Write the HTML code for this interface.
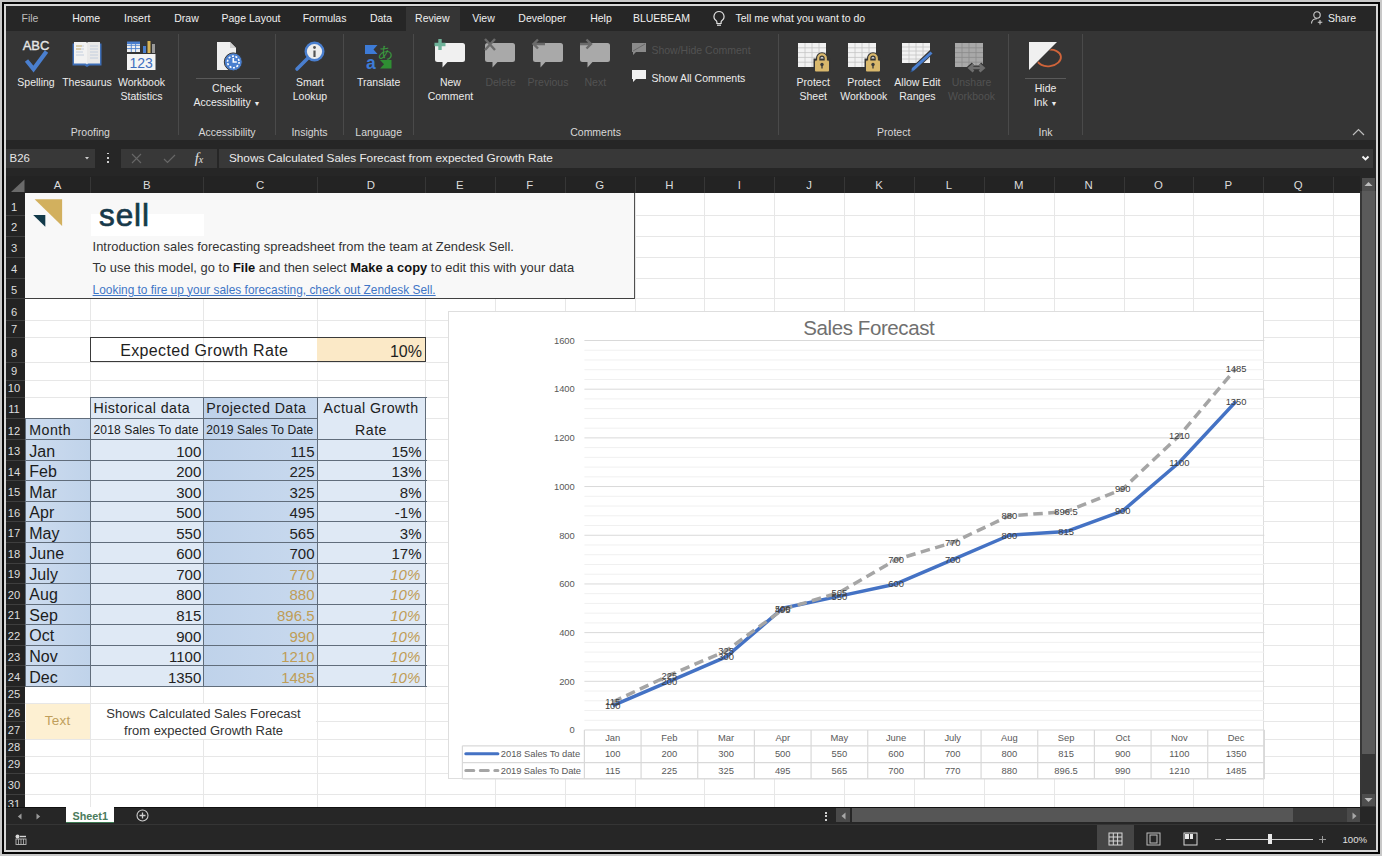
<!DOCTYPE html><html><head><meta charset="utf-8"><style>html,body{margin:0;padding:0;} body{width:1382px;height:856px;position:relative;overflow:hidden;background:#c8c8c8;font-family:"Liberation Sans", sans-serif;}div{box-sizing:border-box;}</style></head><body>
<div style="position:absolute;left:2px;top:2px;width:1378px;height:852px;background:#050505"></div>
<div style="position:absolute;left:4px;top:4px;width:1374px;height:848px;background:#d6d6d6"></div>
<div style="position:absolute;left:6px;top:6px;width:1370px;height:844px;background:#262626"></div>
<div style="position:absolute;left:6px;top:6px;width:1370px;height:24.5px;background:#262626"></div>
<div style="position:absolute;left:405.5px;top:6.5px;width:54.5px;height:24.5px;background:#353535"></div>
<div style="position:absolute;left:-270px;width:600px;text-align:center;top:12.71px;font-size:10.5px;line-height:10.5px;color:#bdbdbd;white-space:nowrap;">File</div>
<div style="position:absolute;left:-213.8px;width:600px;text-align:center;top:12.71px;font-size:10.5px;line-height:10.5px;color:#f0f0f0;white-space:nowrap;">Home</div>
<div style="position:absolute;left:-162.8px;width:600px;text-align:center;top:12.71px;font-size:10.5px;line-height:10.5px;color:#f0f0f0;white-space:nowrap;">Insert</div>
<div style="position:absolute;left:-113.5px;width:600px;text-align:center;top:12.71px;font-size:10.5px;line-height:10.5px;color:#f0f0f0;white-space:nowrap;">Draw</div>
<div style="position:absolute;left:-49px;width:600px;text-align:center;top:12.71px;font-size:10.5px;line-height:10.5px;color:#f0f0f0;white-space:nowrap;">Page Layout</div>
<div style="position:absolute;left:24.600000000000023px;width:600px;text-align:center;top:12.71px;font-size:10.5px;line-height:10.5px;color:#f0f0f0;white-space:nowrap;">Formulas</div>
<div style="position:absolute;left:81px;width:600px;text-align:center;top:12.71px;font-size:10.5px;line-height:10.5px;color:#f0f0f0;white-space:nowrap;">Data</div>
<div style="position:absolute;left:132.3px;width:600px;text-align:center;top:12.71px;font-size:10.5px;line-height:10.5px;color:#f0f0f0;white-space:nowrap;">Review</div>
<div style="position:absolute;left:183.5px;width:600px;text-align:center;top:12.71px;font-size:10.5px;line-height:10.5px;color:#f0f0f0;white-space:nowrap;">View</div>
<div style="position:absolute;left:242.29999999999995px;width:600px;text-align:center;top:12.71px;font-size:10.5px;line-height:10.5px;color:#f0f0f0;white-space:nowrap;">Developer</div>
<div style="position:absolute;left:301px;width:600px;text-align:center;top:12.71px;font-size:10.5px;line-height:10.5px;color:#f0f0f0;white-space:nowrap;">Help</div>
<div style="position:absolute;left:361.5px;width:600px;text-align:center;top:12.71px;font-size:10.5px;line-height:10.5px;color:#f0f0f0;white-space:nowrap;">BLUEBEAM</div>
<svg style="position:absolute;left:711px;top:10px;" width="16" height="17" viewBox="0 0 16 17"><path d="M8 1.5a5 5 0 0 0-3 9c.6.5.9 1.1.9 1.8v1.2h4.2v-1.2c0-.7.3-1.3.9-1.8a5 5 0 0 0-3-9z" fill="none" stroke="#e0e0e0" stroke-width="1.2"/><path d="M6 15.2h4" stroke="#e0e0e0" stroke-width="1.2"/></svg>
<div style="position:absolute;left:735.5px;top:12.71px;font-size:10.5px;line-height:10.5px;color:#f0f0f0;white-space:nowrap;">Tell me what you want to do</div>
<svg style="position:absolute;left:1310px;top:10px;" width="15" height="15" viewBox="0 0 15 15"><circle cx="7" cy="5" r="3.2" fill="none" stroke="#d0d0d0" stroke-width="1.1"/><path d="M1.5 13.5c0-3 2.5-4.8 5.5-4.8" fill="none" stroke="#d0d0d0" stroke-width="1.1"/><path d="M10 10v4.5M7.8 12.2h4.5" stroke="#d0d0d0" stroke-width="1.1"/></svg>
<div style="position:absolute;left:1328px;top:12.71px;font-size:10.5px;line-height:10.5px;color:#f0f0f0;white-space:nowrap;">Share</div>
<div style="position:absolute;left:6px;top:30.5px;width:1370px;height:109px;background:#353535"></div>
<div style="position:absolute;left:178px;top:34px;width:1px;height:101px;background:#4a4a4a"></div>
<div style="position:absolute;left:275px;top:34px;width:1px;height:101px;background:#4a4a4a"></div>
<div style="position:absolute;left:343px;top:34px;width:1px;height:101px;background:#4a4a4a"></div>
<div style="position:absolute;left:413px;top:34px;width:1px;height:101px;background:#4a4a4a"></div>
<div style="position:absolute;left:778px;top:34px;width:1px;height:101px;background:#4a4a4a"></div>
<div style="position:absolute;left:1008px;top:34px;width:1px;height:101px;background:#4a4a4a"></div>
<div style="position:absolute;left:1082px;top:34px;width:1px;height:101px;background:#4a4a4a"></div>
<div style="position:absolute;left:-264px;width:600px;text-align:center;top:77.11px;font-size:10.5px;line-height:10.5px;color:#ececec;white-space:nowrap;">Spelling</div>
<div style="position:absolute;left:-213px;width:600px;text-align:center;top:77.11px;font-size:10.5px;line-height:10.5px;color:#ececec;white-space:nowrap;">Thesaurus</div>
<div style="position:absolute;left:-158.5px;width:600px;text-align:center;top:77.11px;font-size:10.5px;line-height:10.5px;color:#ececec;white-space:nowrap;">Workbook</div>
<div style="position:absolute;left:-158.5px;width:600px;text-align:center;top:91.11px;font-size:10.5px;line-height:10.5px;color:#ececec;white-space:nowrap;">Statistics</div>
<div style="position:absolute;left:-73px;width:600px;text-align:center;top:83.11px;font-size:10.5px;line-height:10.5px;color:#ececec;white-space:nowrap;">Check</div>
<div style="position:absolute;left:-73px;width:600px;text-align:center;top:96.61px;font-size:10.5px;line-height:10.5px;color:#ececec;white-space:nowrap;">Accessibility <span style="font-size:7px">&#9660;</span></div>
<div style="position:absolute;left:10px;width:600px;text-align:center;top:77.11px;font-size:10.5px;line-height:10.5px;color:#ececec;white-space:nowrap;">Smart</div>
<div style="position:absolute;left:10px;width:600px;text-align:center;top:91.11px;font-size:10.5px;line-height:10.5px;color:#ececec;white-space:nowrap;">Lookup</div>
<div style="position:absolute;left:78.69999999999999px;width:600px;text-align:center;top:77.11px;font-size:10.5px;line-height:10.5px;color:#ececec;white-space:nowrap;">Translate</div>
<div style="position:absolute;left:150.39999999999998px;width:600px;text-align:center;top:77.11px;font-size:10.5px;line-height:10.5px;color:#ececec;white-space:nowrap;">New</div>
<div style="position:absolute;left:150.39999999999998px;width:600px;text-align:center;top:91.11px;font-size:10.5px;line-height:10.5px;color:#ececec;white-space:nowrap;">Comment</div>
<div style="position:absolute;left:200.60000000000002px;width:600px;text-align:center;top:77.11px;font-size:10.5px;line-height:10.5px;color:#525252;white-space:nowrap;">Delete</div>
<div style="position:absolute;left:248px;width:600px;text-align:center;top:77.11px;font-size:10.5px;line-height:10.5px;color:#525252;white-space:nowrap;">Previous</div>
<div style="position:absolute;left:295.29999999999995px;width:600px;text-align:center;top:77.11px;font-size:10.5px;line-height:10.5px;color:#525252;white-space:nowrap;">Next</div>
<div style="position:absolute;left:651.4px;top:45.11px;font-size:10.5px;line-height:10.5px;color:#525252;white-space:nowrap;">Show/Hide Comment</div>
<div style="position:absolute;left:651.4px;top:72.61px;font-size:10.5px;line-height:10.5px;color:#ececec;white-space:nowrap;">Show All Comments</div>
<div style="position:absolute;left:513.2px;width:600px;text-align:center;top:77.11px;font-size:10.5px;line-height:10.5px;color:#ececec;white-space:nowrap;">Protect</div>
<div style="position:absolute;left:513.2px;width:600px;text-align:center;top:91.11px;font-size:10.5px;line-height:10.5px;color:#ececec;white-space:nowrap;">Sheet</div>
<div style="position:absolute;left:563.8px;width:600px;text-align:center;top:77.11px;font-size:10.5px;line-height:10.5px;color:#ececec;white-space:nowrap;">Protect</div>
<div style="position:absolute;left:563.8px;width:600px;text-align:center;top:91.11px;font-size:10.5px;line-height:10.5px;color:#ececec;white-space:nowrap;">Workbook</div>
<div style="position:absolute;left:617.4px;width:600px;text-align:center;top:77.11px;font-size:10.5px;line-height:10.5px;color:#ececec;white-space:nowrap;">Allow Edit</div>
<div style="position:absolute;left:617.4px;width:600px;text-align:center;top:91.11px;font-size:10.5px;line-height:10.5px;color:#ececec;white-space:nowrap;">Ranges</div>
<div style="position:absolute;left:671.5px;width:600px;text-align:center;top:77.11px;font-size:10.5px;line-height:10.5px;color:#525252;white-space:nowrap;">Unshare</div>
<div style="position:absolute;left:671.5px;width:600px;text-align:center;top:91.11px;font-size:10.5px;line-height:10.5px;color:#525252;white-space:nowrap;">Workbook</div>
<div style="position:absolute;left:745.5999999999999px;width:600px;text-align:center;top:83.11px;font-size:10.5px;line-height:10.5px;color:#ececec;white-space:nowrap;">Hide</div>
<div style="position:absolute;left:745.5999999999999px;width:600px;text-align:center;top:96.61px;font-size:10.5px;line-height:10.5px;color:#ececec;white-space:nowrap;">Ink <span style="font-size:7px">&#9660;</span></div>
<div style="position:absolute;left:-209.6px;width:600px;text-align:center;top:127.11px;font-size:10.5px;line-height:10.5px;color:#d8d8d8;white-space:nowrap;">Proofing</div>
<div style="position:absolute;left:-73px;width:600px;text-align:center;top:127.11px;font-size:10.5px;line-height:10.5px;color:#d8d8d8;white-space:nowrap;">Accessibility</div>
<div style="position:absolute;left:9.5px;width:600px;text-align:center;top:127.11px;font-size:10.5px;line-height:10.5px;color:#d8d8d8;white-space:nowrap;">Insights</div>
<div style="position:absolute;left:78.69999999999999px;width:600px;text-align:center;top:127.11px;font-size:10.5px;line-height:10.5px;color:#d8d8d8;white-space:nowrap;">Language</div>
<div style="position:absolute;left:295.6px;width:600px;text-align:center;top:127.11px;font-size:10.5px;line-height:10.5px;color:#d8d8d8;white-space:nowrap;">Comments</div>
<div style="position:absolute;left:593.7px;width:600px;text-align:center;top:127.11px;font-size:10.5px;line-height:10.5px;color:#d8d8d8;white-space:nowrap;">Protect</div>
<div style="position:absolute;left:745.5999999999999px;width:600px;text-align:center;top:127.11px;font-size:10.5px;line-height:10.5px;color:#d8d8d8;white-space:nowrap;">Ink</div>
<div style="position:absolute;left:196px;top:78px;width:63.5px;height:1px;background:#5a5a5a"></div>
<div style="position:absolute;left:1025.3px;top:78px;width:40.6px;height:1px;background:#5a5a5a"></div>
<svg style="position:absolute;left:1352px;top:128px;" width="13" height="8" viewBox="0 0 13 8"><path d="M1 7l5.5-5.5L12 7" fill="none" stroke="#bdbdbd" stroke-width="1.2"/></svg>
<svg style="position:absolute;left:18px;top:38px;" width="36" height="36" viewBox="0 0 36 36"><text x="18" y="12.3" text-anchor="middle" font-family="Liberation Sans" font-size="13" fill="#e6e6e6" stroke="#e6e6e6" stroke-width="0.35">ABC</text><path d="M8.5 22.5l7 8.5 13-17.5" fill="none" stroke="#4a7fcf" stroke-width="4.2"/></svg>
<svg style="position:absolute;left:71px;top:41px;" width="32" height="28" viewBox="0 0 32 28"><path d="M1.5 2.5h13c.6 0 1 .4 1.5 1 .5-.6.9-1 1.5-1h13v22h-12l-2.5 1.5-2.5-1.5h-12z" fill="#3e6fb8"/><path d="M3 1h11.5c.8 0 1.5.6 1.5 1.2V23.5c-.3-.6-.9-1-1.5-1H3z" fill="#f2f2f2"/><path d="M29 1H17.5c-.8 0-1.5.6-1.5 1.2V23.5c.3-.6.9-1 1.5-1H29z" fill="#e9e9e9"/><path d="M5 5h8M5 8h8M5 11h7M5 14h8M19 5h8M19 8h8M19 11h8M19 14h8M19 17h8" stroke="#b9c7da" stroke-width="0.8"/><path d="M5 5h6M5 8h5" stroke="#d6b356" stroke-width="0.8"/></svg>
<svg style="position:absolute;left:126px;top:40px;" width="31" height="31" viewBox="0 0 31 31"><rect x="1" y="2" width="13" height="10" fill="#f0f0f0"/><path d="M1 5.3h13M1 8.6h13M5.3 2v10M9.6 2v10" stroke="#4a7fcf" stroke-width="0.9"/><rect x="1" y="1.5" width="13" height="2.5" fill="#4a7fcf"/><rect x="17" y="6" width="3" height="7" fill="#4a7fcf"/><rect x="21.5" y="1" width="3" height="12" fill="#d6b356"/><rect x="26" y="4" width="3" height="9" fill="#9a9a9a"/><rect x="1" y="14" width="28.5" height="16" fill="#f4f4f4"/><text x="15.2" y="27.5" text-anchor="middle" font-family="Liberation Sans" font-size="14" fill="#3f6fc0">123</text></svg>
<svg style="position:absolute;left:214px;top:40px;" width="30" height="32" viewBox="0 0 30 32"><path d="M3 2h13l6 6v22H3z" fill="#efefef"/><path d="M16 2v6h6" fill="#cfcfcf"/><circle cx="19.3" cy="21.9" r="9" fill="#4a7fcf" stroke="#353535" stroke-width="1"/><circle cx="19.3" cy="21.9" r="5.8" fill="none" stroke="#fff" stroke-width="1.6" stroke-dasharray="2 1.6"/><path d="M19.3 18v4h3.5" fill="none" stroke="#fff" stroke-width="1.6"/></svg>
<svg style="position:absolute;left:293px;top:40.5px;" width="33" height="32" viewBox="0 0 33 32"><path d="M4 28l11-11" stroke="#4a7fcf" stroke-width="3.6" stroke-linecap="round"/><circle cx="21.5" cy="10.5" r="8.8" fill="#ededed" stroke="#4a7fcf" stroke-width="2.4"/><circle cx="21.5" cy="6.5" r="1.4" fill="#555"/><path d="M21.5 9.5v6.5" stroke="#555" stroke-width="2.2"/></svg>
<svg style="position:absolute;left:362px;top:39px;" width="33" height="33" viewBox="0 0 33 33"><path d="M3 6H15.5L11.5 10.5L15.5 15H3Z" fill="#3d7bd6"/><text x="8.8" y="30.3" text-anchor="middle" font-family="Liberation Sans" font-size="17.5" font-weight="bold" fill="#3d7bd6">a</text><text x="23.3" y="17.5" text-anchor="middle" font-family="Liberation Sans" font-size="15" fill="#3a9a3f">&#12354;</text><path d="M29.5 21V29.5H18L22 25.2L18 21Z" fill="#2f8f33"/></svg>
<svg style="position:absolute;left:433px;top:38px;" width="34" height="31" viewBox="0 0 34 31"><path d="M4.5 5h25a2.5 2.5 0 0 1 2.5 2.5v14a2.5 2.5 0 0 1-2.5 2.5H14.5l-5 5.5v-5.5H4.5a2.5 2.5 0 0 1-2.5-2.5v-14a2.5 2.5 0 0 1 2.5-2.5z" fill="#f0f0f0"/><path d="M7 1v11M1.5 6.5h11" stroke="#6fb39a" stroke-width="3.4"/></svg>
<svg style="position:absolute;left:483px;top:38px;" width="34" height="31" viewBox="0 0 34 31"><path d="M4.5 5h25a2.5 2.5 0 0 1 2.5 2.5v14a2.5 2.5 0 0 1-2.5 2.5H14.5l-5 5.5v-5.5H4.5a2.5 2.5 0 0 1-2.5-2.5v-14a2.5 2.5 0 0 1 2.5-2.5z" fill="#a9a9a9"/><path d="M2 1l10 11M12 1L2 12" stroke="#6a6a6a" stroke-width="2.4"/></svg>
<svg style="position:absolute;left:531px;top:38px;" width="34" height="31" viewBox="0 0 34 31"><path d="M4.5 5h25a2.5 2.5 0 0 1 2.5 2.5v14a2.5 2.5 0 0 1-2.5 2.5H14.5l-5 5.5v-5.5H4.5a2.5 2.5 0 0 1-2.5-2.5v-14a2.5 2.5 0 0 1 2.5-2.5z" fill="#a9a9a9"/><path d="M14 6H3M7 1.5L2.5 6 7 10.5" fill="none" stroke="#6a6a6a" stroke-width="2.4"/></svg>
<svg style="position:absolute;left:578px;top:38px;" width="34" height="31" viewBox="0 0 34 31"><path d="M4.5 5h25a2.5 2.5 0 0 1 2.5 2.5v14a2.5 2.5 0 0 1-2.5 2.5H14.5l-5 5.5v-5.5H4.5a2.5 2.5 0 0 1-2.5-2.5v-14a2.5 2.5 0 0 1 2.5-2.5z" fill="#a9a9a9"/><path d="M2 6h11M8.5 1.5L13 6 8.5 10.5" fill="none" stroke="#6a6a6a" stroke-width="2.4"/></svg>
<svg style="position:absolute;left:631px;top:42px;" width="16" height="14" viewBox="0 0 16 14"><path d="M1 1h14v9H5l-3 3v-3H1z" fill="#8a8a8a"/><path d="M2 9L14 2" stroke="#6a6a6a" stroke-width="1"/></svg>
<svg style="position:absolute;left:631px;top:69px;" width="16" height="14" viewBox="0 0 16 14"><path d="M1 1h14v9H5l-3 3v-3H1z" fill="#f0f0f0"/></svg>
<svg style="position:absolute;left:797px;top:42px;" width="34" height="32" viewBox="0 0 34 32"><path d="M1 1h28v24H1z" fill="#f2f2f2"/><path d="M1 5.8h28" stroke="#c4c4c4" stroke-width="0.8"/><path d="M1 10.6h28" stroke="#c4c4c4" stroke-width="0.8"/><path d="M1 15.4h28" stroke="#c4c4c4" stroke-width="0.8"/><path d="M1 20.2h28" stroke="#c4c4c4" stroke-width="0.8"/><path d="M8 1v24" stroke="#c4c4c4" stroke-width="0.8"/><path d="M15 1v24" stroke="#c4c4c4" stroke-width="0.8"/><path d="M22 1v24" stroke="#c4c4c4" stroke-width="0.8"/><path d="M16.5 16.5h17v14h-17z" fill="#353535"/><path d="M21.2 19v-2.8a3.8 3.8 0 0 1 7.6 0v2.8" fill="none" stroke="#353535" stroke-width="4.5"/><path d="M21.2 19v-2.8a3.8 3.8 0 0 1 7.6 0v2.8" fill="none" stroke="#d9b86c" stroke-width="2.2"/><rect x="18" y="18.5" width="14" height="11" rx="1" fill="#d9b86c"/><circle cx="25" cy="22.5" r="1.7" fill="#3a3a3a"/><path d="M25 22.5v4" stroke="#3a3a3a" stroke-width="1.3"/></svg>
<svg style="position:absolute;left:847px;top:42px;" width="34" height="32" viewBox="0 0 34 32"><path d="M1 1h28v24H1z" fill="#f2f2f2"/><path d="M1 5.8h28" stroke="#c4c4c4" stroke-width="0.8"/><path d="M1 10.6h28" stroke="#c4c4c4" stroke-width="0.8"/><path d="M1 15.4h28" stroke="#c4c4c4" stroke-width="0.8"/><path d="M1 20.2h28" stroke="#c4c4c4" stroke-width="0.8"/><path d="M8 1v24" stroke="#c4c4c4" stroke-width="0.8"/><path d="M15 1v24" stroke="#c4c4c4" stroke-width="0.8"/><path d="M22 1v24" stroke="#c4c4c4" stroke-width="0.8"/><path d="M17.5 16.5h17v14h-17z" fill="#353535"/><path d="M22.2 19v-2.8a3.8 3.8 0 0 1 7.6 0v2.8" fill="none" stroke="#353535" stroke-width="4.5"/><path d="M22.2 19v-2.8a3.8 3.8 0 0 1 7.6 0v2.8" fill="none" stroke="#d9b86c" stroke-width="2.2"/><rect x="19" y="18.5" width="14" height="11" rx="1" fill="#d9b86c"/><circle cx="26" cy="22.5" r="1.7" fill="#3a3a3a"/><path d="M26 22.5v4" stroke="#3a3a3a" stroke-width="1.3"/></svg>
<svg style="position:absolute;left:901px;top:42px;" width="36" height="32" viewBox="0 0 36 32"><path d="M1 1h28v20H1z" fill="#f2f2f2"/><path d="M1 5.0h28" stroke="#c4c4c4" stroke-width="0.8"/><path d="M1 9.0h28" stroke="#c4c4c4" stroke-width="0.8"/><path d="M1 13.0h28" stroke="#c4c4c4" stroke-width="0.8"/><path d="M1 17.0h28" stroke="#c4c4c4" stroke-width="0.8"/><path d="M8 1v20" stroke="#c4c4c4" stroke-width="0.8"/><path d="M15 1v20" stroke="#c4c4c4" stroke-width="0.8"/><path d="M22 1v20" stroke="#c4c4c4" stroke-width="0.8"/><path d="M8.5 30.5l1.5-4.5L29 8l3.5 3.5L14 29z" fill="#353535"/><path d="M10 29.5l1-3.5L29.5 9.5 31.5 11.5 13 28.5z" fill="#4a7fcf"/><path d="M9.2 30.6l1.2-3 2 2z" fill="#2c4f80"/></svg>
<svg style="position:absolute;left:954px;top:42px;" width="34" height="32" viewBox="0 0 34 32"><path d="M1 1h28v24H1z" fill="#a8a8a8"/><path d="M1 5.8h28" stroke="#8a8a8a" stroke-width="0.8"/><path d="M1 10.6h28" stroke="#8a8a8a" stroke-width="0.8"/><path d="M1 15.4h28" stroke="#8a8a8a" stroke-width="0.8"/><path d="M1 20.2h28" stroke="#8a8a8a" stroke-width="0.8"/><path d="M8 1v24" stroke="#8a8a8a" stroke-width="0.8"/><path d="M15 1v24" stroke="#8a8a8a" stroke-width="0.8"/><path d="M22 1v24" stroke="#8a8a8a" stroke-width="0.8"/><path d="M16 26h13M19.5 22.5l-4 3.5 4 3.5M25.5 22.5l4 3.5-4 3.5" fill="none" stroke="#353535" stroke-width="5"/><path d="M16 26h13M19.5 22.5l-4 3.5 4 3.5M25.5 22.5l4 3.5-4 3.5" fill="none" stroke="#6e6e6e" stroke-width="2.6"/></svg>
<svg style="position:absolute;left:1027px;top:40px;" width="36" height="32" viewBox="0 0 36 32"><path d="M2 2h28L2 30z" fill="#f0f0f0"/><ellipse cx="22" cy="18" rx="12" ry="8.2" fill="none" stroke="#d0643a" stroke-width="1.8" transform="rotate(-8 22 18)"/><path d="M30 2L2 30" stroke="#353535" stroke-width="1.5"/><path d="M2 2h28L2 30z" fill="#f0f0f0" clip-path="none"/></svg>
<div style="position:absolute;left:6px;top:139.5px;width:1370px;height:36px;background:#262626"></div>
<div style="position:absolute;left:6px;top:148.5px;width:89px;height:19.5px;background:#383838"></div>
<div style="position:absolute;left:9.6px;top:153.15px;font-size:11.4px;line-height:11.4px;color:#e6e6e6;white-space:nowrap;">B26</div>
<svg style="position:absolute;left:85px;top:157px;" width="4" height="3" viewBox="0 0 4 3"><path d="M0 0h4L2 2.5z" fill="#cfcfcf"/></svg>
<div style="position:absolute;left:107px;top:152.6px;width:1.7px;height:1.7px;background:#cfcfcf"></div>
<div style="position:absolute;left:107px;top:157px;width:1.7px;height:1.7px;background:#cfcfcf"></div>
<div style="position:absolute;left:107px;top:161.4px;width:1.7px;height:1.7px;background:#cfcfcf"></div>
<div style="position:absolute;left:121px;top:148.5px;width:96px;height:19.5px;background:#383838"></div>
<svg style="position:absolute;left:131px;top:153px;" width="11" height="11" viewBox="0 0 11 11"><path d="M1 1l9 9M10 1L1 10" stroke="#676767" stroke-width="1.1"/></svg>
<svg style="position:absolute;left:163px;top:153px;" width="13" height="11" viewBox="0 0 13 11"><path d="M1 6l3.5 3.5L12 2" fill="none" stroke="#676767" stroke-width="1.2"/></svg>
<div style="position:absolute;left:194.8px;top:150.73px;font-size:14.5px;line-height:14.5px;color:#e0e0e0;white-space:nowrap;font-family:'Liberation Serif',serif;"><i>f</i><span style="font-size:10px"><i>x</i></span></div>
<div style="position:absolute;left:219px;top:148.5px;width:1154px;height:19.5px;background:#383838"></div>
<div style="position:absolute;left:228.9px;top:152.81px;font-size:11.8px;line-height:11.8px;color:#ececec;white-space:nowrap;">Shows Calculated Sales Forecast from expected Growth Rate</div>
<svg style="position:absolute;left:1361px;top:155px;" width="9" height="7" viewBox="0 0 9 7"><path d="M1.5 1.5l3 3 3-3" fill="none" stroke="#f4f4f4" stroke-width="1.9"/></svg>
<div style="position:absolute;left:6px;top:175.5px;width:1354px;height:17.5px;background:#232323"></div>
<svg style="position:absolute;left:10px;top:178px;" width="16" height="15" viewBox="0 0 16 15"><path d="M14.5 1.5V14H1z" fill="#6a6a6a"/></svg>
<div style="position:absolute;left:-242.35px;width:600px;text-align:center;top:180.15px;font-size:11.4px;line-height:11.4px;color:#dcdcdc;white-space:nowrap;">A</div>
<div style="position:absolute;left:90px;top:177px;width:1px;height:16px;background:#363636"></div>
<div style="position:absolute;left:-153.2px;width:600px;text-align:center;top:180.15px;font-size:11.4px;line-height:11.4px;color:#dcdcdc;white-space:nowrap;">B</div>
<div style="position:absolute;left:203px;top:177px;width:1px;height:16px;background:#363636"></div>
<div style="position:absolute;left:-39.94999999999999px;width:600px;text-align:center;top:180.15px;font-size:11.4px;line-height:11.4px;color:#dcdcdc;white-space:nowrap;">C</div>
<div style="position:absolute;left:317px;top:177px;width:1px;height:16px;background:#363636"></div>
<div style="position:absolute;left:70.89999999999998px;width:600px;text-align:center;top:180.15px;font-size:11.4px;line-height:11.4px;color:#dcdcdc;white-space:nowrap;">D</div>
<div style="position:absolute;left:425px;top:177px;width:1px;height:16px;background:#363636"></div>
<div style="position:absolute;left:159.925px;width:600px;text-align:center;top:180.15px;font-size:11.4px;line-height:11.4px;color:#dcdcdc;white-space:nowrap;">E</div>
<div style="position:absolute;left:495px;top:177px;width:1px;height:16px;background:#363636"></div>
<div style="position:absolute;left:229.7750000000001px;width:600px;text-align:center;top:180.15px;font-size:11.4px;line-height:11.4px;color:#dcdcdc;white-space:nowrap;">F</div>
<div style="position:absolute;left:565px;top:177px;width:1px;height:16px;background:#363636"></div>
<div style="position:absolute;left:299.625px;width:600px;text-align:center;top:180.15px;font-size:11.4px;line-height:11.4px;color:#dcdcdc;white-space:nowrap;">G</div>
<div style="position:absolute;left:635px;top:177px;width:1px;height:16px;background:#363636"></div>
<div style="position:absolute;left:369.4749999999999px;width:600px;text-align:center;top:180.15px;font-size:11.4px;line-height:11.4px;color:#dcdcdc;white-space:nowrap;">H</div>
<div style="position:absolute;left:704px;top:177px;width:1px;height:16px;background:#363636"></div>
<div style="position:absolute;left:439.32500000000005px;width:600px;text-align:center;top:180.15px;font-size:11.4px;line-height:11.4px;color:#dcdcdc;white-space:nowrap;">I</div>
<div style="position:absolute;left:774px;top:177px;width:1px;height:16px;background:#363636"></div>
<div style="position:absolute;left:509.17499999999995px;width:600px;text-align:center;top:180.15px;font-size:11.4px;line-height:11.4px;color:#dcdcdc;white-space:nowrap;">J</div>
<div style="position:absolute;left:844px;top:177px;width:1px;height:16px;background:#363636"></div>
<div style="position:absolute;left:579.0249999999999px;width:600px;text-align:center;top:180.15px;font-size:11.4px;line-height:11.4px;color:#dcdcdc;white-space:nowrap;">K</div>
<div style="position:absolute;left:914px;top:177px;width:1px;height:16px;background:#363636"></div>
<div style="position:absolute;left:648.875px;width:600px;text-align:center;top:180.15px;font-size:11.4px;line-height:11.4px;color:#dcdcdc;white-space:nowrap;">L</div>
<div style="position:absolute;left:984px;top:177px;width:1px;height:16px;background:#363636"></div>
<div style="position:absolute;left:718.725px;width:600px;text-align:center;top:180.15px;font-size:11.4px;line-height:11.4px;color:#dcdcdc;white-space:nowrap;">M</div>
<div style="position:absolute;left:1054px;top:177px;width:1px;height:16px;background:#363636"></div>
<div style="position:absolute;left:788.575px;width:600px;text-align:center;top:180.15px;font-size:11.4px;line-height:11.4px;color:#dcdcdc;white-space:nowrap;">N</div>
<div style="position:absolute;left:1124px;top:177px;width:1px;height:16px;background:#363636"></div>
<div style="position:absolute;left:858.425px;width:600px;text-align:center;top:180.15px;font-size:11.4px;line-height:11.4px;color:#dcdcdc;white-space:nowrap;">O</div>
<div style="position:absolute;left:1193px;top:177px;width:1px;height:16px;background:#363636"></div>
<div style="position:absolute;left:928.2749999999999px;width:600px;text-align:center;top:180.15px;font-size:11.4px;line-height:11.4px;color:#dcdcdc;white-space:nowrap;">P</div>
<div style="position:absolute;left:1263px;top:177px;width:1px;height:16px;background:#363636"></div>
<div style="position:absolute;left:998.125px;width:600px;text-align:center;top:180.15px;font-size:11.4px;line-height:11.4px;color:#dcdcdc;white-space:nowrap;">Q</div>
<div style="position:absolute;left:1333px;top:177px;width:1px;height:16px;background:#363636"></div>
<div style="position:absolute;left:6px;top:193px;width:19px;height:613.6px;background:#232323"></div>
<div style="position:absolute;left:6px;top:215px;width:19px;height:1px;background:#3e3e3e"></div>
<div style="position:absolute;left:-286px;width:600px;text-align:center;top:201.72px;font-size:11.2px;line-height:11.2px;color:#dedede;white-space:nowrap;">1</div>
<div style="position:absolute;left:6px;top:236px;width:19px;height:1px;background:#3e3e3e"></div>
<div style="position:absolute;left:-286px;width:600px;text-align:center;top:222.22px;font-size:11.2px;line-height:11.2px;color:#dedede;white-space:nowrap;">2</div>
<div style="position:absolute;left:6px;top:257px;width:19px;height:1px;background:#3e3e3e"></div>
<div style="position:absolute;left:-286px;width:600px;text-align:center;top:242.92px;font-size:11.2px;line-height:11.2px;color:#dedede;white-space:nowrap;">3</div>
<div style="position:absolute;left:6px;top:278px;width:19px;height:1px;background:#3e3e3e"></div>
<div style="position:absolute;left:-286px;width:600px;text-align:center;top:263.92px;font-size:11.2px;line-height:11.2px;color:#dedede;white-space:nowrap;">4</div>
<div style="position:absolute;left:6px;top:298px;width:19px;height:1px;background:#3e3e3e"></div>
<div style="position:absolute;left:-286px;width:600px;text-align:center;top:284.82px;font-size:11.2px;line-height:11.2px;color:#dedede;white-space:nowrap;">5</div>
<div style="position:absolute;left:6px;top:320px;width:19px;height:1px;background:#3e3e3e"></div>
<div style="position:absolute;left:-286px;width:600px;text-align:center;top:306.72px;font-size:11.2px;line-height:11.2px;color:#dedede;white-space:nowrap;">6</div>
<div style="position:absolute;left:6px;top:337px;width:19px;height:1px;background:#3e3e3e"></div>
<div style="position:absolute;left:-286px;width:600px;text-align:center;top:323.72px;font-size:11.2px;line-height:11.2px;color:#dedede;white-space:nowrap;">7</div>
<div style="position:absolute;left:6px;top:362px;width:19px;height:1px;background:#3e3e3e"></div>
<div style="position:absolute;left:-286px;width:600px;text-align:center;top:348.32px;font-size:11.2px;line-height:11.2px;color:#dedede;white-space:nowrap;">8</div>
<div style="position:absolute;left:6px;top:380px;width:19px;height:1px;background:#3e3e3e"></div>
<div style="position:absolute;left:-286px;width:600px;text-align:center;top:365.92px;font-size:11.2px;line-height:11.2px;color:#dedede;white-space:nowrap;">9</div>
<div style="position:absolute;left:6px;top:397px;width:19px;height:1px;background:#3e3e3e"></div>
<div style="position:absolute;left:-286px;width:600px;text-align:center;top:382.92px;font-size:11.2px;line-height:11.2px;color:#dedede;white-space:nowrap;">10</div>
<div style="position:absolute;left:6px;top:418px;width:19px;height:1px;background:#3e3e3e"></div>
<div style="position:absolute;left:-286px;width:600px;text-align:center;top:404.32px;font-size:11.2px;line-height:11.2px;color:#dedede;white-space:nowrap;">11</div>
<div style="position:absolute;left:6px;top:439px;width:19px;height:1px;background:#3e3e3e"></div>
<div style="position:absolute;left:-286px;width:600px;text-align:center;top:425.62px;font-size:11.2px;line-height:11.2px;color:#dedede;white-space:nowrap;">12</div>
<div style="position:absolute;left:6px;top:460px;width:19px;height:1px;background:#3e3e3e"></div>
<div style="position:absolute;left:-286px;width:600px;text-align:center;top:446.16px;font-size:11.2px;line-height:11.2px;color:#dedede;white-space:nowrap;">13</div>
<div style="position:absolute;left:6px;top:480px;width:19px;height:1px;background:#3e3e3e"></div>
<div style="position:absolute;left:-286px;width:600px;text-align:center;top:466.70px;font-size:11.2px;line-height:11.2px;color:#dedede;white-space:nowrap;">14</div>
<div style="position:absolute;left:6px;top:501px;width:19px;height:1px;background:#3e3e3e"></div>
<div style="position:absolute;left:-286px;width:600px;text-align:center;top:487.24px;font-size:11.2px;line-height:11.2px;color:#dedede;white-space:nowrap;">15</div>
<div style="position:absolute;left:6px;top:521px;width:19px;height:1px;background:#3e3e3e"></div>
<div style="position:absolute;left:-286px;width:600px;text-align:center;top:507.78px;font-size:11.2px;line-height:11.2px;color:#dedede;white-space:nowrap;">16</div>
<div style="position:absolute;left:6px;top:542px;width:19px;height:1px;background:#3e3e3e"></div>
<div style="position:absolute;left:-286px;width:600px;text-align:center;top:528.32px;font-size:11.2px;line-height:11.2px;color:#dedede;white-space:nowrap;">17</div>
<div style="position:absolute;left:6px;top:563px;width:19px;height:1px;background:#3e3e3e"></div>
<div style="position:absolute;left:-286px;width:600px;text-align:center;top:548.86px;font-size:11.2px;line-height:11.2px;color:#dedede;white-space:nowrap;">18</div>
<div style="position:absolute;left:6px;top:583px;width:19px;height:1px;background:#3e3e3e"></div>
<div style="position:absolute;left:-286px;width:600px;text-align:center;top:569.40px;font-size:11.2px;line-height:11.2px;color:#dedede;white-space:nowrap;">19</div>
<div style="position:absolute;left:6px;top:604px;width:19px;height:1px;background:#3e3e3e"></div>
<div style="position:absolute;left:-286px;width:600px;text-align:center;top:589.94px;font-size:11.2px;line-height:11.2px;color:#dedede;white-space:nowrap;">20</div>
<div style="position:absolute;left:6px;top:624px;width:19px;height:1px;background:#3e3e3e"></div>
<div style="position:absolute;left:-286px;width:600px;text-align:center;top:610.48px;font-size:11.2px;line-height:11.2px;color:#dedede;white-space:nowrap;">21</div>
<div style="position:absolute;left:6px;top:645px;width:19px;height:1px;background:#3e3e3e"></div>
<div style="position:absolute;left:-286px;width:600px;text-align:center;top:631.02px;font-size:11.2px;line-height:11.2px;color:#dedede;white-space:nowrap;">22</div>
<div style="position:absolute;left:6px;top:665px;width:19px;height:1px;background:#3e3e3e"></div>
<div style="position:absolute;left:-286px;width:600px;text-align:center;top:651.56px;font-size:11.2px;line-height:11.2px;color:#dedede;white-space:nowrap;">23</div>
<div style="position:absolute;left:6px;top:686px;width:19px;height:1px;background:#3e3e3e"></div>
<div style="position:absolute;left:-286px;width:600px;text-align:center;top:672.10px;font-size:11.2px;line-height:11.2px;color:#dedede;white-space:nowrap;">24</div>
<div style="position:absolute;left:6px;top:703px;width:19px;height:1px;background:#3e3e3e"></div>
<div style="position:absolute;left:-286px;width:600px;text-align:center;top:689.32px;font-size:11.2px;line-height:11.2px;color:#dedede;white-space:nowrap;">25</div>
<div style="position:absolute;left:6px;top:721px;width:19px;height:1px;background:#3e3e3e"></div>
<div style="position:absolute;left:-286px;width:600px;text-align:center;top:707.62px;font-size:11.2px;line-height:11.2px;color:#dedede;white-space:nowrap;">26</div>
<div style="position:absolute;left:6px;top:739px;width:19px;height:1px;background:#3e3e3e"></div>
<div style="position:absolute;left:-286px;width:600px;text-align:center;top:725.32px;font-size:11.2px;line-height:11.2px;color:#dedede;white-space:nowrap;">27</div>
<div style="position:absolute;left:6px;top:756px;width:19px;height:1px;background:#3e3e3e"></div>
<div style="position:absolute;left:-286px;width:600px;text-align:center;top:741.82px;font-size:11.2px;line-height:11.2px;color:#dedede;white-space:nowrap;">28</div>
<div style="position:absolute;left:6px;top:773px;width:19px;height:1px;background:#3e3e3e"></div>
<div style="position:absolute;left:-286px;width:600px;text-align:center;top:759.32px;font-size:11.2px;line-height:11.2px;color:#dedede;white-space:nowrap;">29</div>
<div style="position:absolute;left:6px;top:794px;width:19px;height:1px;background:#3e3e3e"></div>
<div style="position:absolute;left:-286px;width:600px;text-align:center;top:780.32px;font-size:11.2px;line-height:11.2px;color:#dedede;white-space:nowrap;">30</div>
<div style="position:absolute;left:-286px;width:600px;text-align:center;top:799.12px;font-size:11.2px;line-height:11.2px;color:#dedede;white-space:nowrap;">31</div>
<div style="position:absolute;left:25px;top:193px;width:1335.4px;height:613.6px;background:#ffffff"></div>
<div style="position:absolute;left:25px;top:215px;width:1335.4px;height:1px;background:#e7e7e7"></div>
<div style="position:absolute;left:25px;top:236px;width:1335.4px;height:1px;background:#e7e7e7"></div>
<div style="position:absolute;left:25px;top:257px;width:1335.4px;height:1px;background:#e7e7e7"></div>
<div style="position:absolute;left:25px;top:278px;width:1335.4px;height:1px;background:#e7e7e7"></div>
<div style="position:absolute;left:25px;top:298px;width:1335.4px;height:1px;background:#e7e7e7"></div>
<div style="position:absolute;left:25px;top:320px;width:1335.4px;height:1px;background:#e7e7e7"></div>
<div style="position:absolute;left:25px;top:337px;width:1335.4px;height:1px;background:#e7e7e7"></div>
<div style="position:absolute;left:25px;top:362px;width:1335.4px;height:1px;background:#e7e7e7"></div>
<div style="position:absolute;left:25px;top:380px;width:1335.4px;height:1px;background:#e7e7e7"></div>
<div style="position:absolute;left:25px;top:397px;width:1335.4px;height:1px;background:#e7e7e7"></div>
<div style="position:absolute;left:25px;top:418px;width:1335.4px;height:1px;background:#e7e7e7"></div>
<div style="position:absolute;left:25px;top:439px;width:1335.4px;height:1px;background:#e7e7e7"></div>
<div style="position:absolute;left:25px;top:460px;width:1335.4px;height:1px;background:#e7e7e7"></div>
<div style="position:absolute;left:25px;top:480px;width:1335.4px;height:1px;background:#e7e7e7"></div>
<div style="position:absolute;left:25px;top:501px;width:1335.4px;height:1px;background:#e7e7e7"></div>
<div style="position:absolute;left:25px;top:521px;width:1335.4px;height:1px;background:#e7e7e7"></div>
<div style="position:absolute;left:25px;top:542px;width:1335.4px;height:1px;background:#e7e7e7"></div>
<div style="position:absolute;left:25px;top:563px;width:1335.4px;height:1px;background:#e7e7e7"></div>
<div style="position:absolute;left:25px;top:583px;width:1335.4px;height:1px;background:#e7e7e7"></div>
<div style="position:absolute;left:25px;top:604px;width:1335.4px;height:1px;background:#e7e7e7"></div>
<div style="position:absolute;left:25px;top:624px;width:1335.4px;height:1px;background:#e7e7e7"></div>
<div style="position:absolute;left:25px;top:645px;width:1335.4px;height:1px;background:#e7e7e7"></div>
<div style="position:absolute;left:25px;top:665px;width:1335.4px;height:1px;background:#e7e7e7"></div>
<div style="position:absolute;left:25px;top:686px;width:1335.4px;height:1px;background:#e7e7e7"></div>
<div style="position:absolute;left:25px;top:703px;width:1335.4px;height:1px;background:#e7e7e7"></div>
<div style="position:absolute;left:25px;top:721px;width:1335.4px;height:1px;background:#e7e7e7"></div>
<div style="position:absolute;left:25px;top:739px;width:1335.4px;height:1px;background:#e7e7e7"></div>
<div style="position:absolute;left:25px;top:756px;width:1335.4px;height:1px;background:#e7e7e7"></div>
<div style="position:absolute;left:25px;top:773px;width:1335.4px;height:1px;background:#e7e7e7"></div>
<div style="position:absolute;left:25px;top:794px;width:1335.4px;height:1px;background:#e7e7e7"></div>
<div style="position:absolute;left:90px;top:193px;width:1px;height:613.6px;background:#e7e7e7"></div>
<div style="position:absolute;left:203px;top:193px;width:1px;height:613.6px;background:#e7e7e7"></div>
<div style="position:absolute;left:317px;top:193px;width:1px;height:613.6px;background:#e7e7e7"></div>
<div style="position:absolute;left:425px;top:193px;width:1px;height:613.6px;background:#e7e7e7"></div>
<div style="position:absolute;left:495px;top:193px;width:1px;height:613.6px;background:#e7e7e7"></div>
<div style="position:absolute;left:565px;top:193px;width:1px;height:613.6px;background:#e7e7e7"></div>
<div style="position:absolute;left:635px;top:193px;width:1px;height:613.6px;background:#e7e7e7"></div>
<div style="position:absolute;left:704px;top:193px;width:1px;height:613.6px;background:#e7e7e7"></div>
<div style="position:absolute;left:774px;top:193px;width:1px;height:613.6px;background:#e7e7e7"></div>
<div style="position:absolute;left:844px;top:193px;width:1px;height:613.6px;background:#e7e7e7"></div>
<div style="position:absolute;left:914px;top:193px;width:1px;height:613.6px;background:#e7e7e7"></div>
<div style="position:absolute;left:984px;top:193px;width:1px;height:613.6px;background:#e7e7e7"></div>
<div style="position:absolute;left:1054px;top:193px;width:1px;height:613.6px;background:#e7e7e7"></div>
<div style="position:absolute;left:1124px;top:193px;width:1px;height:613.6px;background:#e7e7e7"></div>
<div style="position:absolute;left:1193px;top:193px;width:1px;height:613.6px;background:#e7e7e7"></div>
<div style="position:absolute;left:1263px;top:193px;width:1px;height:613.6px;background:#e7e7e7"></div>
<div style="position:absolute;left:1333px;top:193px;width:1px;height:613.6px;background:#e7e7e7"></div>
<div style="position:absolute;left:25px;top:193px;width:610px;height:106px;background:#f8f8f8;border-right:1.6px solid #505050;border-bottom:1.6px solid #404040"></div>
<svg style="position:absolute;left:32px;top:197px;" width="34" height="32" viewBox="0 0 34 32"><path d="M2.6 2.2h27.5V29z" fill="#d2b05e"/><path d="M1.2 18h12.1v11.7z" fill="#123a4a"/></svg>
<div style="position:absolute;left:91px;top:213.6px;width:112.7px;height:22px;background:#ffffff"></div>
<div style="position:absolute;left:99px;top:199.84px;font-size:31.5px;line-height:31.5px;color:#17394a;white-space:nowrap;-webkit-text-stroke:0.7px #17394a;letter-spacing:0.9px;">sell</div>
<div style="position:absolute;left:92.6px;top:240.88px;font-size:12.9px;line-height:12.9px;color:#333333;white-space:nowrap;">Introduction sales forecasting spreadsheet from the team at Zendesk Sell.</div>
<div style="position:absolute;left:92.6px;top:261.58px;font-size:12.9px;line-height:12.9px;color:#333333;white-space:nowrap;letter-spacing:0.025px;">To use this model, go to <b style="color:#111">File</b> and then select <b style="color:#111">Make a copy</b> to edit this with your data</div>
<div style="position:absolute;left:92.6px;top:284.53px;font-size:11.9px;line-height:11.9px;color:#3f76c6;white-space:nowrap;text-decoration:underline;">Looking to fire up your sales forecasting, check out Zendesk Sell.</div>
<div style="position:absolute;left:317px;top:338px;width:108px;height:23.5px;background:#fbe9c7"></div>
<div style="position:absolute;left:90px;top:337px;width:335.5px;height:25px;border:1.6px solid #3a3a3a"></div>
<div style="position:absolute;left:-95.80000000000001px;width:600px;text-align:center;top:343.06px;font-size:16px;line-height:16px;color:#1e1e1e;white-space:nowrap;letter-spacing:0.35px;">Expected Growth Rate</div>
<div style="position:absolute;left:-178px;width:600px;text-align:right;top:343.66px;font-size:16px;line-height:16px;color:#1e1e1e;white-space:nowrap;">10%</div>
<div style="position:absolute;left:25px;top:418px;width:65.3px;height:268.3px;background:linear-gradient(90deg,#cddcef,#c0d3ea)"></div>
<div style="position:absolute;left:90.3px;top:396.6px;width:113px;height:289.7px;background:#dfe9f5"></div>
<div style="position:absolute;left:203.3px;top:396.6px;width:113.5px;height:289.7px;background:linear-gradient(90deg,#bfd2ea,#c8d9ee)"></div>
<div style="position:absolute;left:316.8px;top:396.6px;width:108.5px;height:289.7px;background:#dfe9f5"></div>
<div style="position:absolute;left:90px;top:397px;width:337px;height:1px;background:#616d7b"></div>
<div style="position:absolute;left:25px;top:418px;width:293px;height:1px;background:#616d7b"></div>
<div style="position:absolute;left:25px;top:439px;width:402px;height:1px;background:#616d7b"></div>
<div style="position:absolute;left:25px;top:460px;width:402px;height:1px;background:#616d7b"></div>
<div style="position:absolute;left:25px;top:480px;width:402px;height:1px;background:#616d7b"></div>
<div style="position:absolute;left:25px;top:501px;width:402px;height:1px;background:#616d7b"></div>
<div style="position:absolute;left:25px;top:521px;width:402px;height:1px;background:#616d7b"></div>
<div style="position:absolute;left:25px;top:542px;width:402px;height:1px;background:#616d7b"></div>
<div style="position:absolute;left:25px;top:563px;width:402px;height:1px;background:#616d7b"></div>
<div style="position:absolute;left:25px;top:583px;width:402px;height:1px;background:#616d7b"></div>
<div style="position:absolute;left:25px;top:604px;width:402px;height:1px;background:#616d7b"></div>
<div style="position:absolute;left:25px;top:624px;width:402px;height:1px;background:#616d7b"></div>
<div style="position:absolute;left:25px;top:645px;width:402px;height:1px;background:#616d7b"></div>
<div style="position:absolute;left:25px;top:665px;width:402px;height:1px;background:#616d7b"></div>
<div style="position:absolute;left:25px;top:686px;width:402px;height:1px;background:#616d7b"></div>
<div style="position:absolute;left:90px;top:397px;width:1px;height:290px;background:#616d7b"></div>
<div style="position:absolute;left:203px;top:397px;width:1px;height:290px;background:#616d7b"></div>
<div style="position:absolute;left:317px;top:397px;width:1px;height:290px;background:#616d7b"></div>
<div style="position:absolute;left:425px;top:397px;width:1px;height:290px;background:#616d7b"></div>
<div style="position:absolute;left:25px;top:418px;width:1px;height:269px;background:#616d7b"></div>
<div style="position:absolute;left:93.5px;top:400.98px;font-size:14.2px;line-height:14.2px;color:#202020;white-space:nowrap;letter-spacing:0.45px;">Historical data</div>
<div style="position:absolute;left:206.3px;top:400.98px;font-size:14.2px;line-height:14.2px;color:#202020;white-space:nowrap;letter-spacing:0.45px;">Projected Data</div>
<div style="position:absolute;left:71px;width:600px;text-align:center;top:400.98px;font-size:14.2px;line-height:14.2px;color:#202020;white-space:nowrap;letter-spacing:0.45px;">Actual Growth</div>
<div style="position:absolute;left:71px;width:600px;text-align:center;top:422.58px;font-size:14.2px;line-height:14.2px;color:#202020;white-space:nowrap;letter-spacing:0.45px;">Rate</div>
<div style="position:absolute;left:29.3px;top:422.58px;font-size:14.2px;line-height:14.2px;color:#202020;white-space:nowrap;letter-spacing:0.45px;">Month</div>
<div style="position:absolute;left:93.5px;top:423.76px;font-size:12.1px;line-height:12.1px;color:#202020;white-space:nowrap;letter-spacing:0.1px;">2018 Sales To date</div>
<div style="position:absolute;left:206.3px;top:423.76px;font-size:12.1px;line-height:12.1px;color:#202020;white-space:nowrap;letter-spacing:0.1px;">2019 Sales To Date</div>
<div style="position:absolute;left:29.2px;top:443.60px;font-size:16px;line-height:16px;color:#1c1c1c;white-space:nowrap;letter-spacing:0.1px;">Jan</div>
<div style="position:absolute;left:-398.7px;width:600px;text-align:right;top:443.64px;font-size:15px;line-height:15px;color:#222;white-space:nowrap;">100</div>
<div style="position:absolute;left:-285.5px;width:600px;text-align:right;top:443.64px;font-size:15px;line-height:15px;color:#222;white-space:nowrap;">115</div>
<div style="position:absolute;left:-178.5px;width:600px;text-align:right;top:443.64px;font-size:15px;line-height:15px;color:#222;white-space:nowrap;">15%</div>
<div style="position:absolute;left:29.2px;top:464.14px;font-size:16px;line-height:16px;color:#1c1c1c;white-space:nowrap;letter-spacing:0.1px;">Feb</div>
<div style="position:absolute;left:-398.7px;width:600px;text-align:right;top:464.18px;font-size:15px;line-height:15px;color:#222;white-space:nowrap;">200</div>
<div style="position:absolute;left:-285.5px;width:600px;text-align:right;top:464.18px;font-size:15px;line-height:15px;color:#222;white-space:nowrap;">225</div>
<div style="position:absolute;left:-178.5px;width:600px;text-align:right;top:464.18px;font-size:15px;line-height:15px;color:#222;white-space:nowrap;">13%</div>
<div style="position:absolute;left:29.2px;top:484.68px;font-size:16px;line-height:16px;color:#1c1c1c;white-space:nowrap;letter-spacing:0.1px;">Mar</div>
<div style="position:absolute;left:-398.7px;width:600px;text-align:right;top:484.72px;font-size:15px;line-height:15px;color:#222;white-space:nowrap;">300</div>
<div style="position:absolute;left:-285.5px;width:600px;text-align:right;top:484.72px;font-size:15px;line-height:15px;color:#222;white-space:nowrap;">325</div>
<div style="position:absolute;left:-178.5px;width:600px;text-align:right;top:484.72px;font-size:15px;line-height:15px;color:#222;white-space:nowrap;">8%</div>
<div style="position:absolute;left:29.2px;top:505.22px;font-size:16px;line-height:16px;color:#1c1c1c;white-space:nowrap;letter-spacing:0.1px;">Apr</div>
<div style="position:absolute;left:-398.7px;width:600px;text-align:right;top:505.26px;font-size:15px;line-height:15px;color:#222;white-space:nowrap;">500</div>
<div style="position:absolute;left:-285.5px;width:600px;text-align:right;top:505.26px;font-size:15px;line-height:15px;color:#222;white-space:nowrap;">495</div>
<div style="position:absolute;left:-178.5px;width:600px;text-align:right;top:505.26px;font-size:15px;line-height:15px;color:#222;white-space:nowrap;">-1%</div>
<div style="position:absolute;left:29.2px;top:525.76px;font-size:16px;line-height:16px;color:#1c1c1c;white-space:nowrap;letter-spacing:0.1px;">May</div>
<div style="position:absolute;left:-398.7px;width:600px;text-align:right;top:525.80px;font-size:15px;line-height:15px;color:#222;white-space:nowrap;">550</div>
<div style="position:absolute;left:-285.5px;width:600px;text-align:right;top:525.80px;font-size:15px;line-height:15px;color:#222;white-space:nowrap;">565</div>
<div style="position:absolute;left:-178.5px;width:600px;text-align:right;top:525.80px;font-size:15px;line-height:15px;color:#222;white-space:nowrap;">3%</div>
<div style="position:absolute;left:29.2px;top:546.30px;font-size:16px;line-height:16px;color:#1c1c1c;white-space:nowrap;letter-spacing:0.1px;">June</div>
<div style="position:absolute;left:-398.7px;width:600px;text-align:right;top:546.34px;font-size:15px;line-height:15px;color:#222;white-space:nowrap;">600</div>
<div style="position:absolute;left:-285.5px;width:600px;text-align:right;top:546.34px;font-size:15px;line-height:15px;color:#222;white-space:nowrap;">700</div>
<div style="position:absolute;left:-178.5px;width:600px;text-align:right;top:546.34px;font-size:15px;line-height:15px;color:#222;white-space:nowrap;">17%</div>
<div style="position:absolute;left:29.2px;top:566.84px;font-size:16px;line-height:16px;color:#1c1c1c;white-space:nowrap;letter-spacing:0.1px;">July</div>
<div style="position:absolute;left:-398.7px;width:600px;text-align:right;top:566.88px;font-size:15px;line-height:15px;color:#222;white-space:nowrap;">700</div>
<div style="position:absolute;left:-285.5px;width:600px;text-align:right;top:566.88px;font-size:15px;line-height:15px;color:#bf9d57;white-space:nowrap;">770</div>
<div style="position:absolute;left:-179.7px;width:600px;text-align:right;top:566.88px;font-size:15px;line-height:15px;color:#bf9d57;white-space:nowrap;font-style:italic;">10%</div>
<div style="position:absolute;left:29.2px;top:587.38px;font-size:16px;line-height:16px;color:#1c1c1c;white-space:nowrap;letter-spacing:0.1px;">Aug</div>
<div style="position:absolute;left:-398.7px;width:600px;text-align:right;top:587.42px;font-size:15px;line-height:15px;color:#222;white-space:nowrap;">800</div>
<div style="position:absolute;left:-285.5px;width:600px;text-align:right;top:587.42px;font-size:15px;line-height:15px;color:#bf9d57;white-space:nowrap;">880</div>
<div style="position:absolute;left:-179.7px;width:600px;text-align:right;top:587.42px;font-size:15px;line-height:15px;color:#bf9d57;white-space:nowrap;font-style:italic;">10%</div>
<div style="position:absolute;left:29.2px;top:607.92px;font-size:16px;line-height:16px;color:#1c1c1c;white-space:nowrap;letter-spacing:0.1px;">Sep</div>
<div style="position:absolute;left:-398.7px;width:600px;text-align:right;top:607.96px;font-size:15px;line-height:15px;color:#222;white-space:nowrap;">815</div>
<div style="position:absolute;left:-285.5px;width:600px;text-align:right;top:607.96px;font-size:15px;line-height:15px;color:#bf9d57;white-space:nowrap;">896.5</div>
<div style="position:absolute;left:-179.7px;width:600px;text-align:right;top:607.96px;font-size:15px;line-height:15px;color:#bf9d57;white-space:nowrap;font-style:italic;">10%</div>
<div style="position:absolute;left:29.2px;top:628.46px;font-size:16px;line-height:16px;color:#1c1c1c;white-space:nowrap;letter-spacing:0.1px;">Oct</div>
<div style="position:absolute;left:-398.7px;width:600px;text-align:right;top:628.50px;font-size:15px;line-height:15px;color:#222;white-space:nowrap;">900</div>
<div style="position:absolute;left:-285.5px;width:600px;text-align:right;top:628.50px;font-size:15px;line-height:15px;color:#bf9d57;white-space:nowrap;">990</div>
<div style="position:absolute;left:-179.7px;width:600px;text-align:right;top:628.50px;font-size:15px;line-height:15px;color:#bf9d57;white-space:nowrap;font-style:italic;">10%</div>
<div style="position:absolute;left:29.2px;top:649.00px;font-size:16px;line-height:16px;color:#1c1c1c;white-space:nowrap;letter-spacing:0.1px;">Nov</div>
<div style="position:absolute;left:-398.7px;width:600px;text-align:right;top:649.04px;font-size:15px;line-height:15px;color:#222;white-space:nowrap;">1100</div>
<div style="position:absolute;left:-285.5px;width:600px;text-align:right;top:649.04px;font-size:15px;line-height:15px;color:#bf9d57;white-space:nowrap;">1210</div>
<div style="position:absolute;left:-179.7px;width:600px;text-align:right;top:649.04px;font-size:15px;line-height:15px;color:#bf9d57;white-space:nowrap;font-style:italic;">10%</div>
<div style="position:absolute;left:29.2px;top:669.54px;font-size:16px;line-height:16px;color:#1c1c1c;white-space:nowrap;letter-spacing:0.1px;">Dec</div>
<div style="position:absolute;left:-398.7px;width:600px;text-align:right;top:669.58px;font-size:15px;line-height:15px;color:#222;white-space:nowrap;">1350</div>
<div style="position:absolute;left:-285.5px;width:600px;text-align:right;top:669.58px;font-size:15px;line-height:15px;color:#bf9d57;white-space:nowrap;">1485</div>
<div style="position:absolute;left:-179.7px;width:600px;text-align:right;top:669.58px;font-size:15px;line-height:15px;color:#bf9d57;white-space:nowrap;font-style:italic;">10%</div>
<div style="position:absolute;left:25.5px;top:703.5px;width:64.5px;height:35.5px;background:#fdf0d2"></div>
<div style="position:absolute;left:90.8px;top:703.5px;width:225.5px;height:35.5px;background:#ffffff"></div>
<div style="position:absolute;left:26px;top:721px;width:64px;height:1px;background:#fdf0d2"></div>
<div style="position:absolute;left:-242.4px;width:600px;text-align:center;top:714.17px;font-size:13.5px;line-height:13.5px;color:#bf9f5c;white-space:nowrap;letter-spacing:0.3px;">Text</div>
<div style="position:absolute;left:-96.5px;width:600px;text-align:center;top:706.90px;font-size:13px;line-height:13px;color:#333333;white-space:nowrap;">Shows Calculated Sales Forecast</div>
<div style="position:absolute;left:-96.5px;width:600px;text-align:center;top:724.10px;font-size:13px;line-height:13px;color:#333333;white-space:nowrap;">from expected Growth Rate</div>
<div style="position:absolute;left:448.4px;top:310.6px;width:816.0000000000001px;height:468.6px;background:#ffffff;border:1px solid #dedede"></div>
<svg style="position:absolute;left:440px;top:300px;font-family:'Liberation Sans',sans-serif;" width="840" height="490" viewBox="0 0 840 490"><line x1="144.39999999999998" y1="420.26" x2="824.4000000000001" y2="420.26" stroke="#f0f0f0" stroke-width="1"/><line x1="144.39999999999998" y1="410.52" x2="824.4000000000001" y2="410.52" stroke="#f0f0f0" stroke-width="1"/><line x1="144.39999999999998" y1="400.79" x2="824.4000000000001" y2="400.79" stroke="#f0f0f0" stroke-width="1"/><line x1="144.39999999999998" y1="391.05" x2="824.4000000000001" y2="391.05" stroke="#f0f0f0" stroke-width="1"/><line x1="144.39999999999998" y1="371.58" x2="824.4000000000001" y2="371.58" stroke="#f0f0f0" stroke-width="1"/><line x1="144.39999999999998" y1="361.84" x2="824.4000000000001" y2="361.84" stroke="#f0f0f0" stroke-width="1"/><line x1="144.39999999999998" y1="352.10" x2="824.4000000000001" y2="352.10" stroke="#f0f0f0" stroke-width="1"/><line x1="144.39999999999998" y1="342.36" x2="824.4000000000001" y2="342.36" stroke="#f0f0f0" stroke-width="1"/><line x1="144.39999999999998" y1="322.89" x2="824.4000000000001" y2="322.89" stroke="#f0f0f0" stroke-width="1"/><line x1="144.39999999999998" y1="313.15" x2="824.4000000000001" y2="313.15" stroke="#f0f0f0" stroke-width="1"/><line x1="144.39999999999998" y1="303.41" x2="824.4000000000001" y2="303.41" stroke="#f0f0f0" stroke-width="1"/><line x1="144.39999999999998" y1="293.67" x2="824.4000000000001" y2="293.67" stroke="#f0f0f0" stroke-width="1"/><line x1="144.39999999999998" y1="274.20" x2="824.4000000000001" y2="274.20" stroke="#f0f0f0" stroke-width="1"/><line x1="144.39999999999998" y1="264.46" x2="824.4000000000001" y2="264.46" stroke="#f0f0f0" stroke-width="1"/><line x1="144.39999999999998" y1="254.73" x2="824.4000000000001" y2="254.73" stroke="#f0f0f0" stroke-width="1"/><line x1="144.39999999999998" y1="244.99" x2="824.4000000000001" y2="244.99" stroke="#f0f0f0" stroke-width="1"/><line x1="144.39999999999998" y1="225.51" x2="824.4000000000001" y2="225.51" stroke="#f0f0f0" stroke-width="1"/><line x1="144.39999999999998" y1="215.77" x2="824.4000000000001" y2="215.77" stroke="#f0f0f0" stroke-width="1"/><line x1="144.39999999999998" y1="206.04" x2="824.4000000000001" y2="206.04" stroke="#f0f0f0" stroke-width="1"/><line x1="144.39999999999998" y1="196.30" x2="824.4000000000001" y2="196.30" stroke="#f0f0f0" stroke-width="1"/><line x1="144.39999999999998" y1="176.82" x2="824.4000000000001" y2="176.82" stroke="#f0f0f0" stroke-width="1"/><line x1="144.39999999999998" y1="167.09" x2="824.4000000000001" y2="167.09" stroke="#f0f0f0" stroke-width="1"/><line x1="144.39999999999998" y1="157.35" x2="824.4000000000001" y2="157.35" stroke="#f0f0f0" stroke-width="1"/><line x1="144.39999999999998" y1="147.61" x2="824.4000000000001" y2="147.61" stroke="#f0f0f0" stroke-width="1"/><line x1="144.39999999999998" y1="128.14" x2="824.4000000000001" y2="128.14" stroke="#f0f0f0" stroke-width="1"/><line x1="144.39999999999998" y1="118.40" x2="824.4000000000001" y2="118.40" stroke="#f0f0f0" stroke-width="1"/><line x1="144.39999999999998" y1="108.66" x2="824.4000000000001" y2="108.66" stroke="#f0f0f0" stroke-width="1"/><line x1="144.39999999999998" y1="98.93" x2="824.4000000000001" y2="98.93" stroke="#f0f0f0" stroke-width="1"/><line x1="144.39999999999998" y1="79.45" x2="824.4000000000001" y2="79.45" stroke="#f0f0f0" stroke-width="1"/><line x1="144.39999999999998" y1="69.71" x2="824.4000000000001" y2="69.71" stroke="#f0f0f0" stroke-width="1"/><line x1="144.39999999999998" y1="59.98" x2="824.4000000000001" y2="59.98" stroke="#f0f0f0" stroke-width="1"/><line x1="144.39999999999998" y1="50.24" x2="824.4000000000001" y2="50.24" stroke="#f0f0f0" stroke-width="1"/><line x1="144.39999999999998" y1="381.31" x2="824.4000000000001" y2="381.31" stroke="#d9d9d9" stroke-width="1"/><text x="134.79999999999995" y="384.61" text-anchor="end" font-size="9.4" fill="#595959">200</text><line x1="144.39999999999998" y1="332.62" x2="824.4000000000001" y2="332.62" stroke="#d9d9d9" stroke-width="1"/><text x="134.79999999999995" y="335.93" text-anchor="end" font-size="9.4" fill="#595959">400</text><line x1="144.39999999999998" y1="283.94" x2="824.4000000000001" y2="283.94" stroke="#d9d9d9" stroke-width="1"/><text x="134.79999999999995" y="287.24" text-anchor="end" font-size="9.4" fill="#595959">600</text><line x1="144.39999999999998" y1="235.25" x2="824.4000000000001" y2="235.25" stroke="#d9d9d9" stroke-width="1"/><text x="134.79999999999995" y="238.55" text-anchor="end" font-size="9.4" fill="#595959">800</text><line x1="144.39999999999998" y1="186.56" x2="824.4000000000001" y2="186.56" stroke="#d9d9d9" stroke-width="1"/><text x="134.79999999999995" y="189.86" text-anchor="end" font-size="9.4" fill="#595959">1000</text><line x1="144.39999999999998" y1="137.88" x2="824.4000000000001" y2="137.88" stroke="#d9d9d9" stroke-width="1"/><text x="134.79999999999995" y="141.18" text-anchor="end" font-size="9.4" fill="#595959">1200</text><line x1="144.39999999999998" y1="89.19" x2="824.4000000000001" y2="89.19" stroke="#d9d9d9" stroke-width="1"/><text x="134.79999999999995" y="92.49" text-anchor="end" font-size="9.4" fill="#595959">1400</text><line x1="144.39999999999998" y1="40.50" x2="824.4000000000001" y2="40.50" stroke="#d9d9d9" stroke-width="1"/><text x="134.79999999999995" y="43.80" text-anchor="end" font-size="9.4" fill="#595959">1600</text><text x="134.79999999999995" y="433.30" text-anchor="end" font-size="9.4" fill="#595959">0</text><line x1="144.39999999999998" y1="430" x2="824.4000000000001" y2="430" stroke="#d9d9d9" stroke-width="1.2"/><line x1="22.399999999999977" y1="445.79999999999995" x2="824.4000000000001" y2="445.79999999999995" stroke="#d9d9d9" stroke-width="1.2"/><line x1="22.399999999999977" y1="462.6" x2="824.4000000000001" y2="462.6" stroke="#d9d9d9" stroke-width="1.2"/><line x1="22.399999999999977" y1="479" x2="824.4000000000001" y2="479" stroke="#d9d9d9" stroke-width="1.2"/><line x1="22.399999999999977" y1="445.79999999999995" x2="22.399999999999977" y2="479" stroke="#d9d9d9" stroke-width="1.2"/><line x1="144.40" y1="430" x2="144.40" y2="479" stroke="#d9d9d9" stroke-width="1.2"/><line x1="201.07" y1="430" x2="201.07" y2="479" stroke="#d9d9d9" stroke-width="1.2"/><line x1="257.73" y1="430" x2="257.73" y2="479" stroke="#d9d9d9" stroke-width="1.2"/><line x1="314.40" y1="430" x2="314.40" y2="479" stroke="#d9d9d9" stroke-width="1.2"/><line x1="371.07" y1="430" x2="371.07" y2="479" stroke="#d9d9d9" stroke-width="1.2"/><line x1="427.73" y1="430" x2="427.73" y2="479" stroke="#d9d9d9" stroke-width="1.2"/><line x1="484.40" y1="430" x2="484.40" y2="479" stroke="#d9d9d9" stroke-width="1.2"/><line x1="541.07" y1="430" x2="541.07" y2="479" stroke="#d9d9d9" stroke-width="1.2"/><line x1="597.73" y1="430" x2="597.73" y2="479" stroke="#d9d9d9" stroke-width="1.2"/><line x1="654.40" y1="430" x2="654.40" y2="479" stroke="#d9d9d9" stroke-width="1.2"/><line x1="711.07" y1="430" x2="711.07" y2="479" stroke="#d9d9d9" stroke-width="1.2"/><line x1="767.73" y1="430" x2="767.73" y2="479" stroke="#d9d9d9" stroke-width="1.2"/><line x1="824.40" y1="430" x2="824.40" y2="479" stroke="#d9d9d9" stroke-width="1.2"/><text x="172.73" y="441.29999999999995" text-anchor="middle" font-size="9.4" fill="#595959">Jan</text><text x="172.73" y="457.20000000000005" text-anchor="middle" font-size="9.4" fill="#595959">100</text><text x="172.73" y="474.0" text-anchor="middle" font-size="9.4" fill="#595959">115</text><text x="229.40" y="441.29999999999995" text-anchor="middle" font-size="9.4" fill="#595959">Feb</text><text x="229.40" y="457.20000000000005" text-anchor="middle" font-size="9.4" fill="#595959">200</text><text x="229.40" y="474.0" text-anchor="middle" font-size="9.4" fill="#595959">225</text><text x="286.07" y="441.29999999999995" text-anchor="middle" font-size="9.4" fill="#595959">Mar</text><text x="286.07" y="457.20000000000005" text-anchor="middle" font-size="9.4" fill="#595959">300</text><text x="286.07" y="474.0" text-anchor="middle" font-size="9.4" fill="#595959">325</text><text x="342.73" y="441.29999999999995" text-anchor="middle" font-size="9.4" fill="#595959">Apr</text><text x="342.73" y="457.20000000000005" text-anchor="middle" font-size="9.4" fill="#595959">500</text><text x="342.73" y="474.0" text-anchor="middle" font-size="9.4" fill="#595959">495</text><text x="399.40" y="441.29999999999995" text-anchor="middle" font-size="9.4" fill="#595959">May</text><text x="399.40" y="457.20000000000005" text-anchor="middle" font-size="9.4" fill="#595959">550</text><text x="399.40" y="474.0" text-anchor="middle" font-size="9.4" fill="#595959">565</text><text x="456.07" y="441.29999999999995" text-anchor="middle" font-size="9.4" fill="#595959">June</text><text x="456.07" y="457.20000000000005" text-anchor="middle" font-size="9.4" fill="#595959">600</text><text x="456.07" y="474.0" text-anchor="middle" font-size="9.4" fill="#595959">700</text><text x="512.73" y="441.29999999999995" text-anchor="middle" font-size="9.4" fill="#595959">July</text><text x="512.73" y="457.20000000000005" text-anchor="middle" font-size="9.4" fill="#595959">700</text><text x="512.73" y="474.0" text-anchor="middle" font-size="9.4" fill="#595959">770</text><text x="569.40" y="441.29999999999995" text-anchor="middle" font-size="9.4" fill="#595959">Aug</text><text x="569.40" y="457.20000000000005" text-anchor="middle" font-size="9.4" fill="#595959">800</text><text x="569.40" y="474.0" text-anchor="middle" font-size="9.4" fill="#595959">880</text><text x="626.07" y="441.29999999999995" text-anchor="middle" font-size="9.4" fill="#595959">Sep</text><text x="626.07" y="457.20000000000005" text-anchor="middle" font-size="9.4" fill="#595959">815</text><text x="626.07" y="474.0" text-anchor="middle" font-size="9.4" fill="#595959">896.5</text><text x="682.73" y="441.29999999999995" text-anchor="middle" font-size="9.4" fill="#595959">Oct</text><text x="682.73" y="457.20000000000005" text-anchor="middle" font-size="9.4" fill="#595959">900</text><text x="682.73" y="474.0" text-anchor="middle" font-size="9.4" fill="#595959">990</text><text x="739.40" y="441.29999999999995" text-anchor="middle" font-size="9.4" fill="#595959">Nov</text><text x="739.40" y="457.20000000000005" text-anchor="middle" font-size="9.4" fill="#595959">1100</text><text x="739.40" y="474.0" text-anchor="middle" font-size="9.4" fill="#595959">1210</text><text x="796.07" y="441.29999999999995" text-anchor="middle" font-size="9.4" fill="#595959">Dec</text><text x="796.07" y="457.20000000000005" text-anchor="middle" font-size="9.4" fill="#595959">1350</text><text x="796.07" y="474.0" text-anchor="middle" font-size="9.4" fill="#595959">1485</text><line x1="25.80000000000001" y1="453.79999999999995" x2="57.89999999999998" y2="453.79999999999995" stroke="#4472c4" stroke-width="3" stroke-linecap="round"/><line x1="25.80000000000001" y1="470.6" x2="57.89999999999998" y2="470.6" stroke="#a5a5a5" stroke-width="3" stroke-linecap="round" stroke-dasharray="8 6.5"/><text x="60.80000000000001" y="457.20000000000005" font-size="9.4" fill="#595959" textLength="79.3">2018 Sales To date</text><text x="60.80000000000001" y="474.0" font-size="9.4" fill="#595959" textLength="80.2">2019 Sales To Date</text><text x="429" y="35.19999999999999" text-anchor="middle" font-size="20.5" fill="#707070" textLength="131.5">Sales Forecast</text><polyline points="172.73,405.66 229.40,381.31 286.07,356.97 342.73,308.28 399.40,296.11 456.07,283.94 512.73,259.59 569.40,235.25 626.07,231.60 682.73,210.91 739.40,162.22 796.07,101.36" fill="none" stroke="#4472c4" stroke-width="3.5" stroke-linejoin="round"/><polyline points="172.73,402.00 229.40,375.23 286.07,350.88 342.73,309.50 399.40,292.46 456.07,259.59 512.73,242.55 569.40,215.77 626.07,211.76 682.73,189.00 739.40,135.44 796.07,68.50" fill="none" stroke="#a5a5a5" stroke-width="3.5" stroke-dasharray="9.5 5.5" stroke-linejoin="round"/><text x="172.73" y="409.06" text-anchor="middle" font-size="9.4" fill="#404040">100</text><text x="172.73" y="405.40" text-anchor="middle" font-size="9.4" fill="#404040">115</text><text x="229.40" y="384.71" text-anchor="middle" font-size="9.4" fill="#404040">200</text><text x="229.40" y="378.63" text-anchor="middle" font-size="9.4" fill="#404040">225</text><text x="286.07" y="360.37" text-anchor="middle" font-size="9.4" fill="#404040">300</text><text x="286.07" y="354.28" text-anchor="middle" font-size="9.4" fill="#404040">325</text><text x="342.73" y="311.68" text-anchor="middle" font-size="9.4" fill="#404040">500</text><text x="342.73" y="312.90" text-anchor="middle" font-size="9.4" fill="#404040">495</text><text x="399.40" y="299.51" text-anchor="middle" font-size="9.4" fill="#404040">550</text><text x="399.40" y="295.86" text-anchor="middle" font-size="9.4" fill="#404040">565</text><text x="456.07" y="287.34" text-anchor="middle" font-size="9.4" fill="#404040">600</text><text x="456.07" y="262.99" text-anchor="middle" font-size="9.4" fill="#404040">700</text><text x="512.73" y="262.99" text-anchor="middle" font-size="9.4" fill="#404040">700</text><text x="512.73" y="245.95" text-anchor="middle" font-size="9.4" fill="#404040">770</text><text x="569.40" y="238.65" text-anchor="middle" font-size="9.4" fill="#404040">800</text><text x="569.40" y="219.17" text-anchor="middle" font-size="9.4" fill="#404040">880</text><text x="626.07" y="235.00" text-anchor="middle" font-size="9.4" fill="#404040">815</text><text x="626.07" y="215.16" text-anchor="middle" font-size="9.4" fill="#404040">896.5</text><text x="682.73" y="214.31" text-anchor="middle" font-size="9.4" fill="#404040">900</text><text x="682.73" y="192.40" text-anchor="middle" font-size="9.4" fill="#404040">990</text><text x="739.40" y="165.62" text-anchor="middle" font-size="9.4" fill="#404040">1100</text><text x="739.40" y="138.84" text-anchor="middle" font-size="9.4" fill="#404040">1210</text><text x="796.07" y="104.76" text-anchor="middle" font-size="9.4" fill="#404040">1350</text><text x="796.07" y="71.90" text-anchor="middle" font-size="9.4" fill="#404040">1485</text></svg>
<div style="position:absolute;left:1360.4px;top:191px;width:15.6px;height:615.6px;background:#363636"></div>
<div style="position:absolute;left:1362px;top:178.2px;width:13px;height:12.4px;background:#4e4e4e"></div>
<svg style="position:absolute;left:1364px;top:181px;" width="9" height="6" viewBox="0 0 9 6"><path d="M0.5 5L4.5 1 8.5 5z" fill="#bdbdbd"/></svg>
<div style="position:absolute;left:1362px;top:191.2px;width:13px;height:563.3px;background:#5a5a5a"></div>
<div style="position:absolute;left:1362px;top:794px;width:13px;height:12.4px;background:#4e4e4e"></div>
<svg style="position:absolute;left:1364px;top:797px;" width="9" height="6" viewBox="0 0 9 6"><path d="M0.5 1L4.5 5 8.5 1z" fill="#bdbdbd"/></svg>
<div style="position:absolute;left:6px;top:806.6px;width:1370px;height:18px;background:#262626"></div>
<div style="position:absolute;left:6px;top:806.6px;width:1354.4px;height:1.2px;background:#111"></div>
<svg style="position:absolute;left:17px;top:812.5px;" width="5" height="7" viewBox="0 0 5 7"><path d="M4.5 0.5L0.8 3.5 4.5 6.5z" fill="#9a9a9a"/></svg>
<svg style="position:absolute;left:35.5px;top:812.5px;" width="5" height="7" viewBox="0 0 5 7"><path d="M0.5 0.5L4.2 3.5 0.5 6.5z" fill="#9a9a9a"/></svg>
<div style="position:absolute;left:66.1px;top:807px;width:48.2px;height:16.3px;background:#ffffff;border-bottom:1.5px solid #3c7a52"></div>
<div style="position:absolute;left:-209.8px;width:600px;text-align:center;top:810.66px;font-size:10.8px;line-height:10.8px;color:#4b7b5c;white-space:nowrap;font-weight:bold;">Sheet1</div>
<svg style="position:absolute;left:135.5px;top:809.3px;" width="13" height="13" viewBox="0 0 13 13"><circle cx="6.5" cy="6.5" r="5.5" fill="none" stroke="#cfcfcf" stroke-width="1.1"/><path d="M6.5 3.5v6M3.5 6.5h6" stroke="#cfcfcf" stroke-width="1.3"/></svg>
<div style="position:absolute;left:825px;top:811.5px;width:2px;height:2px;background:#d0d0d0"></div>
<div style="position:absolute;left:825px;top:815px;width:2px;height:2px;background:#d0d0d0"></div>
<div style="position:absolute;left:825px;top:818.5px;width:2px;height:2px;background:#d0d0d0"></div>
<div style="position:absolute;left:836.2px;top:808.3px;width:13.8px;height:14.1px;background:#4a4a4a"></div>
<svg style="position:absolute;left:839.5px;top:811.5px;" width="7" height="8" viewBox="0 0 7 8"><path d="M5.5 0.5L1.5 4 5.5 7.5z" fill="#a8a8a8"/></svg>
<div style="position:absolute;left:851.7px;top:808.3px;width:441.1px;height:14.1px;background:#565656"></div>
<div style="position:absolute;left:1292.8px;top:808.3px;width:54.5px;height:14.1px;background:#3a3a3a"></div>
<div style="position:absolute;left:1347.3px;top:808.3px;width:12.7px;height:14.1px;background:#4a4a4a"></div>
<svg style="position:absolute;left:1350.5px;top:811.5px;" width="7" height="8" viewBox="0 0 7 8"><path d="M1.5 0.5L5.5 4 1.5 7.5z" fill="#a8a8a8"/></svg>
<div style="position:absolute;left:6px;top:824px;width:1370px;height:1.2px;background:#353535"></div>
<div style="position:absolute;left:6px;top:825.2px;width:1370px;height:24.8px;background:#262626"></div>
<svg style="position:absolute;left:15px;top:834px;" width="12" height="11" viewBox="0 0 12 11"><circle cx="2.5" cy="2.5" r="2" fill="#d8d8d8"/><path d="M5 2.5h6" stroke="#d8d8d8" stroke-width="1.4"/><rect x="1" y="5" width="10" height="5.5" fill="none" stroke="#bdbdbd" stroke-width="0.9"/><path d="M3.5 5v5.5M6 5v5.5M8.5 5v5.5" stroke="#bdbdbd" stroke-width="0.8"/></svg>
<div style="position:absolute;left:1097.4px;top:825.4px;width:37px;height:24.2px;background:#464646"></div>
<svg style="position:absolute;left:1108px;top:832px;" width="15" height="14" viewBox="0 0 15 14"><rect x="1" y="1" width="13" height="12" fill="none" stroke="#d8d8d8" stroke-width="1"/><path d="M1 5h13M1 9h13M5.3 1v12M9.6 1v12" stroke="#d8d8d8" stroke-width="1"/></svg>
<svg style="position:absolute;left:1145.5px;top:832px;" width="15" height="14" viewBox="0 0 15 14"><rect x="1" y="1" width="13" height="12" fill="none" stroke="#bdbdbd" stroke-width="1"/><rect x="4" y="3" width="7" height="8" fill="none" stroke="#bdbdbd" stroke-width="1"/></svg>
<svg style="position:absolute;left:1183px;top:832px;" width="15" height="14" viewBox="0 0 15 14"><rect x="1" y="1" width="13" height="12" fill="none" stroke="#d8d8d8" stroke-width="1"/><rect x="2" y="2" width="4" height="5" fill="#e8e8e8"/><rect x="7" y="2" width="3" height="5" fill="#e8e8e8"/></svg>
<div style="position:absolute;left:1214.5px;top:838.5px;width:6px;height:1px;background:#9a9a9a"></div>
<div style="position:absolute;left:1226.3px;top:838.6px;width:87.2px;height:1.4px;background:#d0d0d0"></div>
<div style="position:absolute;left:1268px;top:834.2px;width:4.3px;height:9.6px;background:#e8e8e8"></div>
<div style="position:absolute;left:1318.5px;top:838.5px;width:7px;height:1px;background:#9a9a9a"></div>
<div style="position:absolute;left:1321.5px;top:835.5px;width:1px;height:7px;background:#9a9a9a"></div>
<div style="position:absolute;left:1342.5px;top:834.87px;font-size:9.6px;line-height:9.6px;color:#e0e0e0;white-space:nowrap;">100%</div>
</body></html>
